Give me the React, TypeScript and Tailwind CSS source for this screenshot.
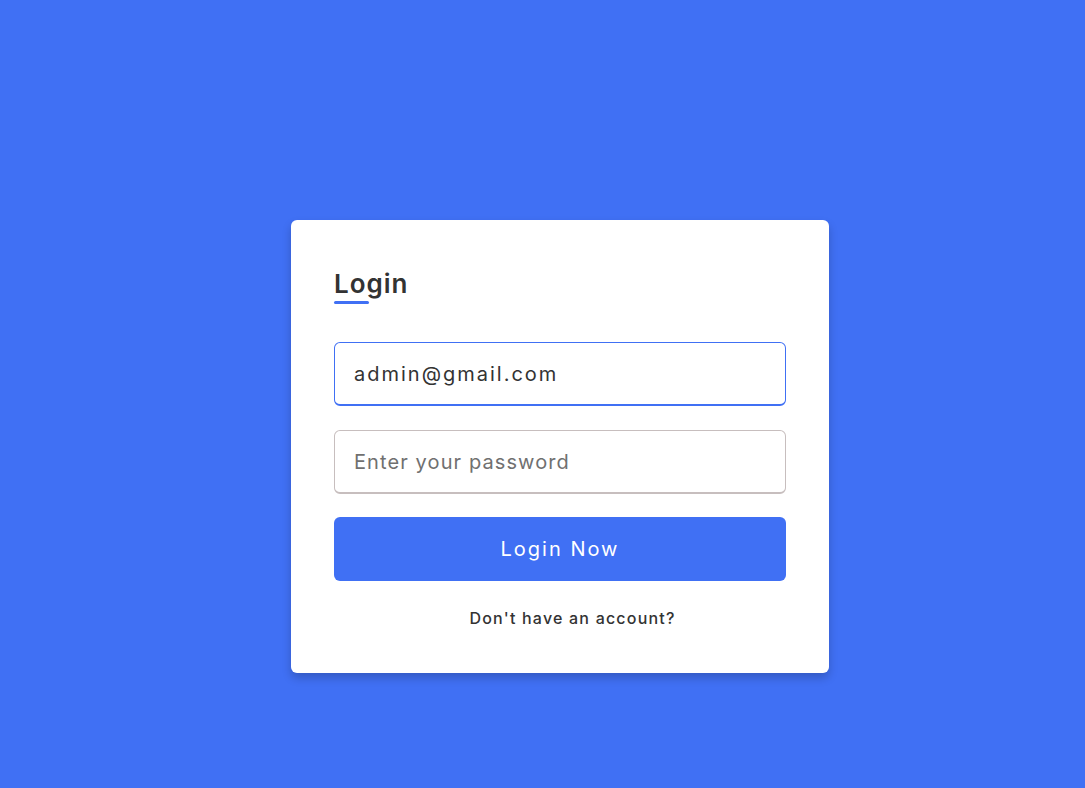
import React, { useState } from 'react';

const App: React.FC = () => {
  const [email, setEmail] = useState('admin@gmail.com');
  const [password, setPassword] = useState('');

  return (
    <div className="min-h-screen w-full bg-[#4070f4] pt-[220px] pl-[291px] font-['Inter','Noto_Sans',sans-serif] text-[#333]">
      <div className="w-[538px] h-[453px] bg-white rounded-md shadow-[0_5px_10px_rgba(0,0,0,0.2)] px-[43px] pt-[46px]">
        <div className="relative w-max">
          <h2 className="text-[26px] font-semibold leading-[36px] tracking-[1px]">Login</h2>
          <span className="absolute left-0 -bottom-[2px] h-[3px] w-[35px] rounded-full bg-[#4070f4]" />
        </div>

        <form className="mt-[40px] flex flex-col" onSubmit={(e) => e.preventDefault()}>
          <input
            type="text"
            value={email}
            onChange={(e) => setEmail(e.target.value)}
            placeholder="Enter your email"
            className="h-[64px] w-full rounded-md border border-[#4070f4] border-b-2 px-[19px] text-[20px] tracking-[2px] text-[#333] outline-none"
          />
          <input
            type="password"
            value={password}
            onChange={(e) => setPassword(e.target.value)}
            placeholder="Enter your password"
            className="mt-[24px] h-[64px] w-full rounded-md border border-[#c7bebe] border-b-2 px-[19px] text-[20px] tracking-[1.1px] text-[#333] placeholder:text-[#707070] outline-none"
          />
          <button
            type="submit"
            className="mt-[23px] h-[64px] w-full rounded-md bg-[#4070f4] text-[20px] tracking-[2px] text-white"
          >
            Login Now
          </button>
        </form>

        <div className="mt-[25px] flex justify-center pl-[25px] text-[16px] font-medium tracking-[1.2px]">
          Don't have an account?
        </div>
      </div>
    </div>
  );
};

export default App;
